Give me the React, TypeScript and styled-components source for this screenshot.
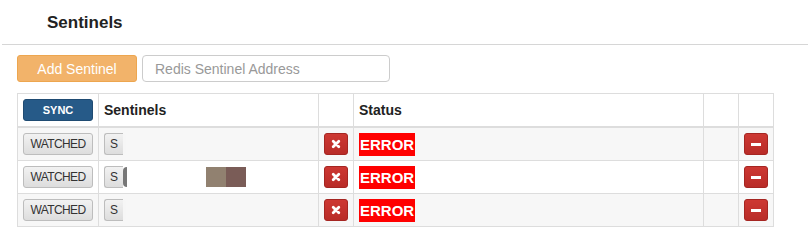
import React from 'react';
import styled, { createGlobalStyle } from 'styled-components';

const GlobalStyle = createGlobalStyle`
  body {
    margin: 0;
    background: #ffffff;
    font-family: "Liberation Sans", Arial, sans-serif;
    color: #333333;
  }
`;

type Sentinel = { id: number; name: string; masked?: boolean };

const sentinels: Sentinel[] = [
  { id: 1, name: 'S' },
  { id: 2, name: 'S', masked: true },
  { id: 3, name: 'S' },
];

const XIcon = () => (
  <svg width="10" height="10" viewBox="0 0 10 10">
    <path d="M2.2 2.2 L7.8 7.8 M7.8 2.2 L2.2 7.8" stroke="#ffffff" strokeWidth="2.8" strokeLinecap="round" />
  </svg>
);

const App: React.FC = () => {
  return (
    <Page>
      <GlobalStyle />
      <Header>
        <Title>Sentinels</Title>
      </Header>
      <Body>
        <AddRow>
          <AddButton>Add Sentinel</AddButton>
          <AddressInput placeholder="Redis Sentinel Address" />
        </AddRow>
        <Table>
          <colgroup>
            <col style={{ width: 81 }} />
            <col style={{ width: 220 }} />
            <col style={{ width: 35 }} />
            <col style={{ width: 350 }} />
            <col style={{ width: 35 }} />
            <col style={{ width: 35 }} />
          </colgroup>
          <thead>
            <tr>
              <Th>
                <SyncButton>SYNC</SyncButton>
              </Th>
              <Th>Sentinels</Th>
              <Th />
              <Th>Status</Th>
              <Th />
              <Th />
            </tr>
          </thead>
          <tbody>
            {sentinels.map((s, i) => (
              <Row key={s.id} $striped={i % 2 === 0}>
                <Td>
                  <WatchButton>WATCHED</WatchButton>
                </Td>
                <Td>
                  <NameCell>
                    <NameButton>{s.name}</NameButton>
                    {s.masked ? (
                      <Masked>
                        <MaskEdge />
                        <MaskBlank />
                        <Swatch $color="#918170" />
                        <Swatch $color="#7a5c57" />
                      </Masked>
                    ) : (
                      <MaskTail />
                    )}
                  </NameCell>
                </Td>
                <Td>
                  <DangerButton>
                    <XIcon />
                  </DangerButton>
                </Td>
                <Td>
                  <ErrorLabel>ERROR</ErrorLabel>
                </Td>
                <Td />
                <Td>
                  <DangerButton>
                    <Minus />
                  </DangerButton>
                </Td>
              </Row>
            ))}
          </tbody>
        </Table>
      </Body>
    </Page>
  );
};

export default App;

const Page = styled.div`
  width: 808px;
  height: 252px;
  overflow: hidden;
`;

const Header = styled.div`
  margin-left: 2px;
  height: 42px;
  padding: 2px 0 0 45px;
  border-bottom: 1px solid #d6d6d6;
  display: flex;
  align-items: center;
`;

const Title = styled.h3`
  margin: 0;
  font-size: 17px;
  font-weight: bold;
  color: #222222;
`;

const Body = styled.div`
  padding: 10px 0 0 17px;
`;

const AddRow = styled.div`
  display: flex;
  align-items: center;
  gap: 5px;
  margin-bottom: 11px;
`;

const AddButton = styled.button`
  width: 120px;
  height: 27px;
  background: #f2b36a;
  border: 1px solid #eda64f;
  border-radius: 3px;
  color: #ffffff;
  font-family: inherit;
  font-size: 14px;
  padding: 0;
`;

const AddressInput = styled.input`
  width: 248px;
  height: 27px;
  box-sizing: border-box;
  border: 1px solid #cccccc;
  border-radius: 4px;
  padding: 0 12px;
  font-family: inherit;
  font-size: 14px;
  color: #555555;

  &::placeholder {
    color: #999999;
  }
`;

const Table = styled.table`
  width: 756px;
  table-layout: fixed;
  border-collapse: collapse;
  border: 1px solid #dddddd;
`;

const Th = styled.th`
  height: 22px;
  padding: 5px;
  border: 1px solid #dddddd;
  border-bottom: 2px solid #dddddd;
  text-align: left;
  vertical-align: middle;
  font-size: 14px;
  font-weight: bold;
  color: #222222;
`;

const Row = styled.tr<{ $striped: boolean }>`
  background: ${(p) => (p.$striped ? '#f7f7f7' : '#ffffff')};
`;

const Td = styled.td`
  height: 22px;
  padding: 5px;
  border: 1px solid #dddddd;
  vertical-align: middle;
  line-height: 22px;
`;

const SyncButton = styled.button`
  display: block;
  width: 70px;
  height: 22px;
  padding: 0;
  background: #265a88;
  border: 1px solid #1f4b72;
  border-radius: 3px;
  color: #ffffff;
  font-family: inherit;
  font-size: 11px;
  font-weight: bold;
`;

const WatchButton = styled.button`
  display: block;
  width: 70px;
  height: 22px;
  padding: 0;
  background: linear-gradient(#f2f2f2, #dddddd);
  border: 1px solid #bdbdbd;
  border-radius: 3px;
  color: #333333;
  font-family: inherit;
  font-size: 12px;
  letter-spacing: -0.6px;
`;

const NameCell = styled.div`
  display: flex;
  align-items: center;
`;

const NameButton = styled.button`
  height: 22px;
  width: 19px;
  padding: 0 0 0 5px;
  text-align: left;
  background: linear-gradient(#f2f2f2, #dddddd);
  border: 1px solid #bdbdbd;
  border-right: none;
  border-radius: 3px 0 0 3px;
  color: #333333;
  font-family: inherit;
  font-size: 12px;
`;

const MaskTail = styled.div`
  width: 3px;
  height: 20px;
  background: #f6f6f6;
  border-radius: 0 8px 8px 0;
`;

const Masked = styled.div`
  display: flex;
  align-items: center;
`;

const MaskEdge = styled.div`
  width: 4px;
  height: 20px;
  background: #777777;
  border-radius: 10px 0 0 10px;
`;

const MaskBlank = styled.div`
  width: 79px;
  height: 22px;
  background: #ffffff;
  border-radius: 4px;
`;

const Swatch = styled.div<{ $color: string }>`
  width: 20px;
  height: 20px;
  background: ${(p) => p.$color};
`;

const DangerButton = styled.button`
  display: flex;
  align-items: center;
  justify-content: center;
  width: 24px;
  height: 22px;
  padding: 0;
  background: linear-gradient(#cd3833, #b92c28);
  border: 1px solid #a52622;
  border-radius: 3px;
`;

const Minus = styled.span`
  display: block;
  width: 10px;
  height: 3px;
  background: #ffffff;
`;

const ErrorLabel = styled.span`
  display: block;
  width: max-content;
  height: 22px;
  margin: -1px 0;
  padding: 1px 1px 0;
  background: #ff0000;
  color: #ffffff;
  font-size: 15px;
  font-weight: bold;
  line-height: 22px;
`;
